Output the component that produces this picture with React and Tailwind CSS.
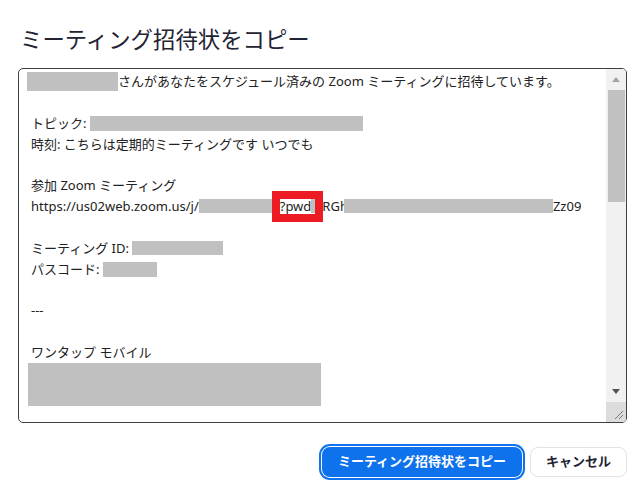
import React from "react";

const Gray = ({ w, h, className = "" }) => (
  <span
    className={"inline-block shrink-0 bg-[#c0c0c0] " + className}
    style={{ width: w, height: h }}
  />
);

const Line = ({ children }) => (
  <div className="flex h-[20.85px] items-center whitespace-pre">{children}</div>
);

export default function App() {
  return (
    <div
      className="min-h-[495px] w-full bg-white pl-[18px] pr-[17px] text-[#232333]"
      style={{ fontFamily: '"Noto Sans", "Noto Sans CJK JP", sans-serif' }}
    >
      <h1 className="ml-[2px] pt-[24px] text-[22.4px] font-normal leading-[32px] text-[#232333]">
        ミーティング招待状をコピー
      </h1>

      <div className="mt-[12px] flex h-[355px] w-[609px] overflow-hidden rounded-[5px] border border-[#3d4145]">
        <div className="relative flex-1 pl-[12px] pt-[2px] text-[13px] leading-[20.85px] text-[#222]">
          <Line>
            <Gray w={91} h={19} className="-ml-[4px]" />
            さんがあなたをスケジュール済みの Zoom ミーティングに招待しています。
          </Line>
          <Line> </Line>
          <Line>
            トピック: <Gray w={273} h={15} />
          </Line>
          <Line>時刻: こちらは定期的ミーティングです いつでも</Line>
          <Line> </Line>
          <Line>参加 Zoom ミーティング</Line>
          <Line>
            https://us02web.zoom.us/j/
            <Gray w={81} h={14} />
            <span className="relative z-10">
              ?pwd
              <span className="absolute -bottom-[5px] -left-[8px] -right-[12px] -top-[5px] border-[8px] border-[#ed1c24]" />
            </span>
            <Gray w={11} h={14} />
            <span>RGh</span>
            <Gray w={209} h={14} className="-ml-[4px]" />
            Zz09
          </Line>
          <Line> </Line>
          <Line>
            ミーティング ID: <Gray w={91} h={14} />
          </Line>
          <Line>
            パスコード: <Gray w={54} h={15} />
          </Line>
          <Line> </Line>
          <Line>---</Line>
          <Line> </Line>
          <Line>ワンタップ モバイル</Line>
          <div className="-ml-[3px] h-[43px] w-[293px] bg-[#c0c0c0]" />
        </div>

        <div className="flex w-[20px] flex-col bg-[#f1f1f1]">
          <div className="flex h-[21px] items-center justify-center">
            <svg width="8" height="5" viewBox="0 0 8 5">
              <polygon points="0,5 8,5 4,0" fill="#a3a3a3" />
            </svg>
          </div>
          <div className="ml-[2px] mr-[1px] h-[112px] bg-[#c1c1c1]" />
          <div className="flex-1" />
          <div className="flex h-[22px] items-center justify-center">
            <svg width="8" height="5" viewBox="0 0 8 5">
              <polygon points="0,0 8,0 4,5" fill="#505050" />
            </svg>
          </div>
          <div className="h-[20px] bg-[#dcdcdc]">
            <svg width="20" height="20" viewBox="0 0 20 20">
              <line x1="17" y1="9" x2="9" y2="17" stroke="#7a7a7a" strokeWidth="1" />
              <line x1="17" y1="13" x2="13" y2="17" stroke="#7a7a7a" strokeWidth="1" />
            </svg>
          </div>
        </div>
      </div>

      <div className="mt-[24px] flex w-[609px] justify-end gap-[8px]">
        <button className="h-[30px] w-[200px] rounded-[8px] bg-[#0e72ed] text-[13px] font-bold text-white shadow-[0_0_0_1px_#ffffff,0_0_0_3px_#0e72ed]">
          ミーティング招待状をコピー
        </button>
        <button className="h-[30px] w-[97px] rounded-[8px] border border-[#dfe3e8] bg-white text-[13px] font-bold text-[#232333]">
          キャンセル
        </button>
      </div>
    </div>
  );
}
